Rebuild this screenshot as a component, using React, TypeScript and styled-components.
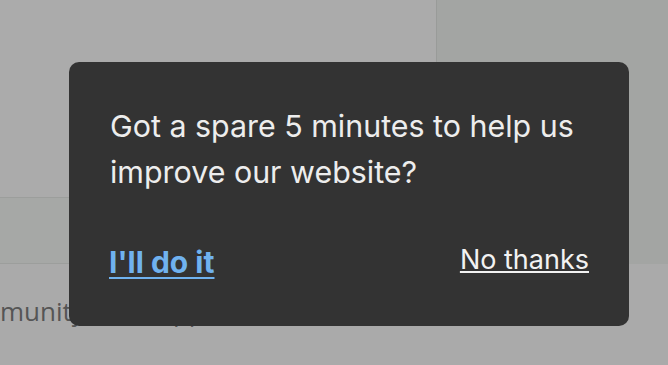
import React from "react";
import styled, { createGlobalStyle } from "styled-components";

const Global = createGlobalStyle`
  html, body { margin: 0; padding: 0; }
  body {
    width: 668px;
    height: 365px;
    overflow: hidden;
    background: #aaaaaa;
    font-family: "Inter", "Noto Sans", sans-serif;
  }
`;

const Page = styled.div`
  position: relative;
  width: 668px;
  height: 365px;
  overflow: hidden;
  display: grid;
  grid-template-columns: 436px 1fr;
  background: #aaaaaa;
`;

const LeftColumn = styled.div`
  display: flex;
  flex-direction: column;
`;

const TopArea = styled.div`
  height: 197px;
  background: #ababab;
  border-bottom: 1px solid #9c9e9c;
`;

const Band = styled.div`
  height: 65px;
  background: #a6a8a6;
  border-bottom: 1px solid #9c9e9c;
`;

const BottomArea = styled.div`
  flex: 1;
  background: #aaaaaa;
  padding-top: 30px;
`;

const BackText = styled.div`
  font-family: "Open Sans", "Noto Sans", sans-serif;
  font-size: 26px;
  color: #555555;
  white-space: nowrap;
  line-height: 34px;
`;

const RightColumn = styled.div`
  height: 264px;
  background: #a3a5a3;
  border-left: 1px solid #999b99;
`;

const Popup = styled.div`
  position: absolute;
  left: 69px;
  top: 62px;
  width: 560px;
  height: 264px;
  box-sizing: border-box;
  background: #333333;
  border-radius: 10px;
  padding: 41px 40px 0 41px;
  display: flex;
  flex-direction: column;
`;

const Message = styled.p`
  margin: 0;
  color: #ededed;
  font-size: 30.4px;
  line-height: 46px;
  font-weight: 400;
`;

const Actions = styled.div`
  margin-top: 48px;
  display: flex;
  justify-content: space-between;
  align-items: center;
`;

const ActionLink = styled.a<{ $primary?: boolean }>`
  font-size: ${(p) => (p.$primary ? "30px" : "27px")};
  font-weight: ${(p) => (p.$primary ? 700 : 400)};
  color: ${(p) => (p.$primary ? "#70b2ef" : "#f2f2f2")};
  text-decoration: underline;
  text-decoration-thickness: 2px;
  text-underline-offset: ${(p) => (p.$primary ? "4px" : "2px")};
  margin-left: ${(p) => (p.$primary ? "-1px" : "0")};
  margin-bottom: ${(p) => (p.$primary ? "0" : "4px")};
  cursor: pointer;
`;

export default function App() {
  return (
    <>
      <Global />
      <Page>
        <LeftColumn>
          <TopArea />
          <Band />
          <BottomArea>
            <BackText>munity and support</BackText>
          </BottomArea>
        </LeftColumn>
        <RightColumn />
        <Popup>
          <Message>
            Got a spare 5 minutes to help us
            <br />
            improve our website?
          </Message>
          <Actions>
            <ActionLink $primary>I'll do it</ActionLink>
            <ActionLink>No thanks</ActionLink>
          </Actions>
        </Popup>
      </Page>
    </>
  );
}
